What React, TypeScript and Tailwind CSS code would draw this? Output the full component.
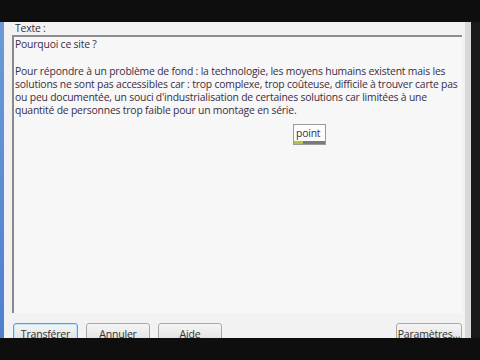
import React from "react";

const font = { fontFamily: '"Open Sans", "Liberation Sans", sans-serif' };

function Btn({ label, primary = false, w }: { label: string; primary?: boolean; w: string }) {
  return (
    <div
      className={`${w} h-[22px] shrink-0 rounded-[3px] border bg-gradient-to-b from-[#f6f6f6] to-[#dcdcdc] text-center text-[10.5px] leading-[20px] tracking-[-0.2px] text-[#333] ${
        primary ? "border-[#5aa0d6] shadow-[inset_0_0_0_1px_#bfe3f8]" : "border-[#a8a8a8]"
      }`}
    >
      {label}
    </div>
  );
}

export default function App() {
  return (
    <div className="flex h-[360px] w-[480px] flex-col overflow-hidden bg-[#0e0e0e]" style={font}>
      <div className="h-[22px] shrink-0" />
      <div className="flex h-[316px] shrink-0">
        <div className="w-[4px] bg-gradient-to-b from-[#6b9ad8] to-[#4f7fd0]" />
        <div className="flex w-[461px] flex-col overflow-hidden bg-[#f2f2f2] pl-[8px] pr-[3px]">
          <div className="h-[13px] shrink-0 pl-[3px] text-[10.4px] leading-[13px] tracking-[-0.2px] text-[#333]">Texte :</div>
          <div className="h-[278px] shrink-0 whitespace-nowrap border-l-[2px] border-t-[2px] border-l-[#8a8a8a] border-t-[#8e8e8e] bg-[#f7f7f7] pl-[1px] pt-[1px] text-[10.4px] leading-[13px] tracking-[-0.2px] text-[#3a2e44]">
            <div>Pourquoi ce site ?</div>
            <div className="h-[14px]" />
            <div>
              Pour répondre à un problème de fond : la technologie, les moyens humains existent mais les
              <br />
              solutions ne sont pas accessibles car : trop complexe, trop coûteuse, difficile à trouver carte pas
              <br />
              ou peu documentée, un souci d'industrialisation de certaines solutions car limitées à une
              <br />
              quantité de personnes trop faible pour un montage en série.
            </div>
            <div className="ml-[278px] mt-[7px] flex w-[33px] flex-col border border-[#9a9a9a] bg-[#fdfdfd]">
              <span className="px-[2px] text-[10.4px] leading-[16px] text-[#3a2e44]">point</span>
              <div className="flex h-[3px]">
                <div className="w-[9px] bg-[#b9c23a]" />
                <div className="flex-1 bg-[#7a7a7a]" />
              </div>
            </div>
          </div>
          <div className="h-[10px] shrink-0" />
          <div className="flex shrink-0 items-start gap-[8px] pl-[1px]">
            <Btn label="Transférer" primary w="w-[65px]" />
            <Btn label="Annuler" w="w-[64px]" />
            <Btn label="Aide" w="w-[64px]" />
            <div className="flex-1" />
            <Btn label="Paramètres..." w="w-[66px]" />
          </div>
        </div>
        <div className="w-[6px] bg-[#d8d8d8]" />
        <div className="w-[9px] bg-[#1a1a1a]" />
      </div>
    </div>
  );
}
